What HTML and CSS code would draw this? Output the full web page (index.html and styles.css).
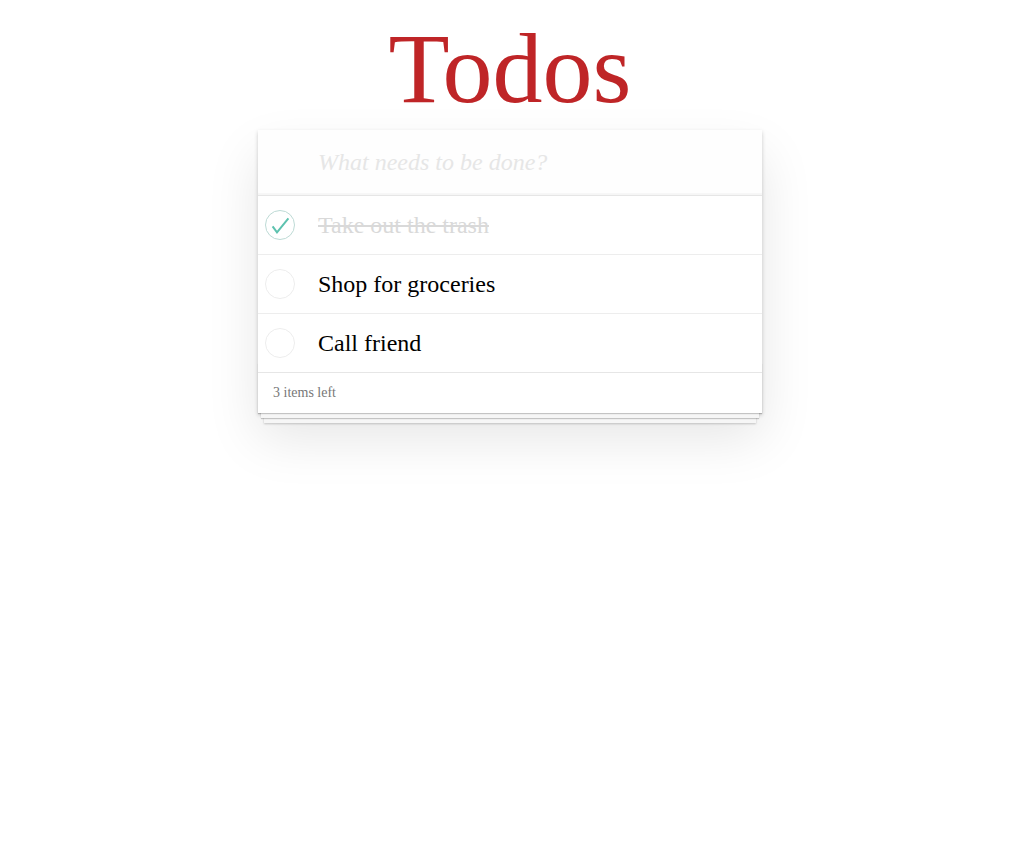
FILE: index.html
```html
<!DOCTYPE html>
<html lang="en">
<head>
<meta charset="utf-8">
<title>Todos</title>
<link rel="stylesheet" href="styles.css">
</head>
<body>
<section class="app">
  <h1 class="title">Todos</h1>
  <div class="card">
    <header class="header">
      <input class="new-todo" type="text" placeholder="What needs to be done?">
    </header>
    <ul class="list">
      <li class="item completed">
        <span class="toggle">
          <svg width="30" height="30" viewBox="0 0 30 30"><circle cx="15" cy="15" r="14.5" fill="none" stroke="#bddad5" stroke-width="1"/><polyline points="7.6,16.4 12,22.4 23.4,8.4" fill="none" stroke="#5dc2af" stroke-width="2"/></svg>
        </span>
        <span class="label">Take out the trash</span>
      </li>
      <li class="item">
        <span class="toggle">
          <svg width="30" height="30" viewBox="0 0 30 30"><circle cx="15" cy="15" r="14.5" fill="none" stroke="#ededed" stroke-width="1"/></svg>
        </span>
        <span class="label">Shop for groceries</span>
      </li>
      <li class="item">
        <span class="toggle">
          <svg width="30" height="30" viewBox="0 0 30 30"><circle cx="15" cy="15" r="14.5" fill="none" stroke="#ededed" stroke-width="1"/></svg>
        </span>
        <span class="label">Call friend</span>
      </li>
    </ul>
    <footer class="footer">
      <span class="count">3 items left</span>
    </footer>
  </div>
</section>
</body>
</html>
```
FILE: styles.css
```css
html, body {
  margin: 0;
  padding: 0;
}

html {
  background: #ffffff;
}

body {
  min-height: 850px;
  background: #ffffff;
  font-family: "Liberation Serif", "Times New Roman", serif;
  color: #111;
}

.app {
  width: 504px;
  margin: 0 auto;
  padding-bottom: 80px;
}

.title {
  margin: 0;
  padding: 19px 0 11px;
  font-size: 100px;
  line-height: 100px;
  font-weight: 400;
  text-align: center;
  color: #bf2527;
}

.card {
  position: relative;
  background: #ffffff;
  box-shadow: 0 2px 4px 0 rgba(0, 0, 0, 0.2), 0 25px 50px 0 rgba(0, 0, 0, 0.1);
}

.header {
  border-bottom: 1px solid #e6e6e6;
}

.new-todo {
  display: block;
  box-sizing: border-box;
  width: 100%;
  margin: 0;
  padding: 16px 16px 16px 60px;
  height: 65px;
  border: none;
  outline: none;
  font-family: inherit;
  font-size: 24px;
  line-height: 33px;
  background: rgba(0, 0, 0, 0.003);
  box-shadow: inset 0 -2px 1px rgba(0, 0, 0, 0.03);
  color: #4d4d4d;
}

.new-todo::placeholder {
  font-style: italic;
  color: #e6e6e6;
}

.list {
  list-style: none;
  margin: 0;
  padding: 0;
}

.item {
  display: flex;
  align-items: center;
  border-bottom: 1px solid #ededed;
}

.item:last-child {
  border-bottom: none;
}

.toggle {
  display: flex;
  width: 30px;
  height: 30px;
  margin-left: 7px;
  margin-right: 23px;
  flex: none;
}

.label {
  padding: 15px 15px 15px 0;
  font-size: 24px;
  line-height: 28px;
  color: #000;
}

.completed .label {
  color: #d9d9d9;
  text-decoration: line-through;
}

.footer {
  position: relative;
  height: 20px;
  padding: 10px 15px;
  border-top: 1px solid #e6e6e6;
  color: #777;
  font-size: 14px;
  line-height: 20px;
}

.footer::before {
  content: "";
  position: absolute;
  left: 0;
  right: 0;
  bottom: 0;
  height: 50px;
  overflow: hidden;
  box-shadow: 0 1px 1px rgba(0, 0, 0, 0.2),
              0 8px 0 -3px #f6f6f6,
              0 9px 1px -3px rgba(0, 0, 0, 0.2),
              0 16px 0 -6px #f6f6f6,
              0 17px 2px -6px rgba(0, 0, 0, 0.2);
}

.count {
  position: relative;
}
```
